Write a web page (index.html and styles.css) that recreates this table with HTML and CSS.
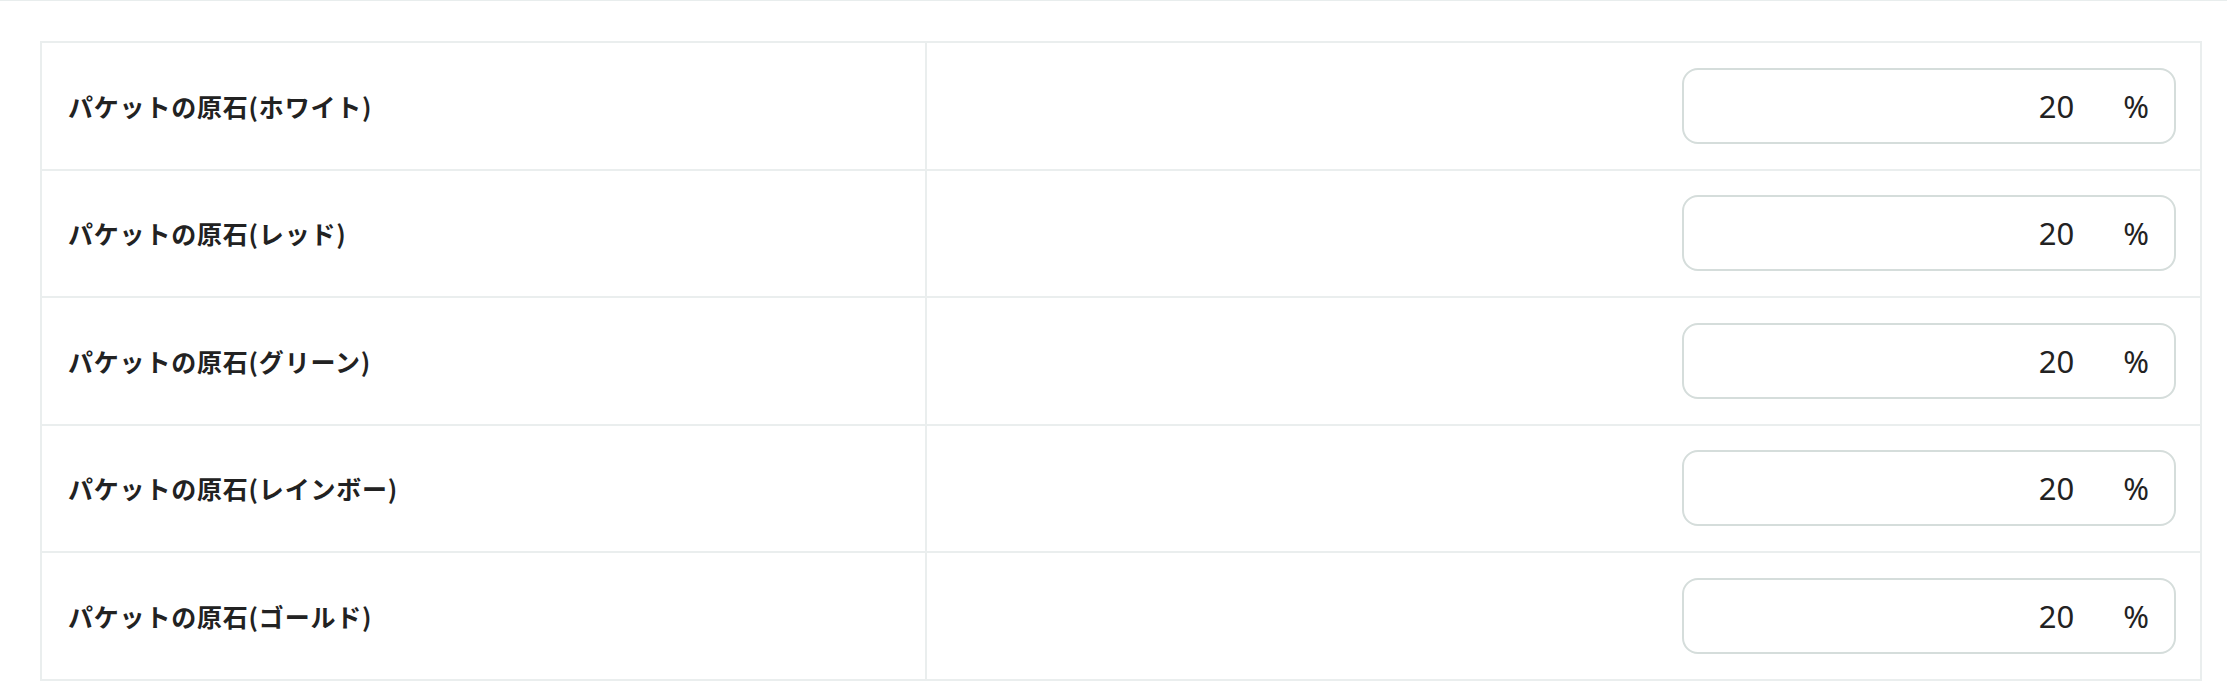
FILE: index.html
```html
<!DOCTYPE html>
<html lang="ja">
<head>
<meta charset="utf-8">
<title>原石の確率</title>
<link rel="stylesheet" href="styles.css">
</head>
<body>
<div class="page">
  <div class="table">
    <div class="row">
      <div class="label">パケットの原石(ホワイト)</div>
      <div class="value"><div class="field"><span class="num">20</span><span class="unit">%</span></div></div>
    </div>
    <div class="row">
      <div class="label">パケットの原石(レッド)</div>
      <div class="value"><div class="field"><span class="num">20</span><span class="unit">%</span></div></div>
    </div>
    <div class="row">
      <div class="label">パケットの原石(グリーン)</div>
      <div class="value"><div class="field"><span class="num">20</span><span class="unit">%</span></div></div>
    </div>
    <div class="row">
      <div class="label">パケットの原石(レインボー)</div>
      <div class="value"><div class="field"><span class="num">20</span><span class="unit">%</span></div></div>
    </div>
    <div class="row">
      <div class="label">パケットの原石(ゴールド)</div>
      <div class="value"><div class="field"><span class="num">20</span><span class="unit">%</span></div></div>
    </div>
  </div>
</div>
</body>
</html>
```

FILE: styles.css
```css
html, body {
  margin: 0;
  padding: 0;
  background: #ffffff;
}

body {
  font-family: "Noto Sans", "Noto Sans CJK JP", sans-serif;
  color: #222222;
}

.page {
  border-top: 1px solid #e8eded;
  padding: 40px 25px 0 40px;
}

.table {
  border: 2px solid #eaeeee;
  border-bottom: none;
}

.row {
  display: grid;
  grid-template-columns: 41% 1fr;
  height: 125.5px;
  border-bottom: 2px solid #eaeeee;
}

.label {
  display: flex;
  align-items: center;
  padding-left: 26px;
  border-right: 2px solid #eaeeee;
  font-family: "Noto Sans CJK JP", sans-serif;
  font-weight: 700;
  font-size: 25px;
  letter-spacing: 0.8px;
  color: #222222;
}

.value {
  display: flex;
  align-items: center;
  justify-content: flex-end;
  padding-right: 24px;
}

.field {
  box-sizing: border-box;
  width: 494px;
  height: 76px;
  border: 2px solid #d5dddb;
  border-radius: 16px;
  display: flex;
  align-items: center;
  justify-content: flex-end;
  padding-right: 25px;
  font-family: "Noto Sans", sans-serif;
  font-size: 31px;
  color: #222222;
}

.num {
  margin-right: 49px;
}
```
